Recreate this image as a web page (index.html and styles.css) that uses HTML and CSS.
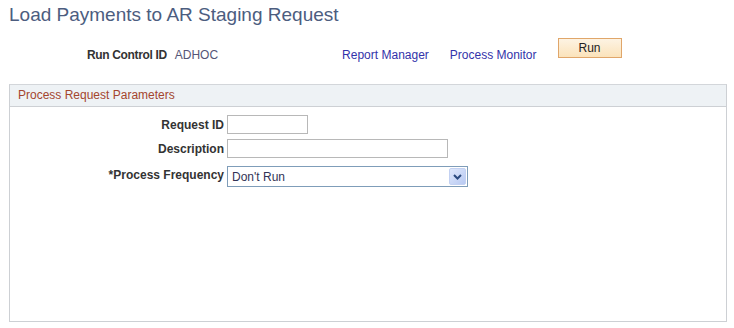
FILE: index.html
```html
<!DOCTYPE html>
<html>
<head>
<meta charset="utf-8">
<link rel="stylesheet" href="styles.css">
</head>
<body>
<h1 class="title">Load Payments to AR Staging Request</h1>
<div class="runbar">
  <span class="lbl rc-label">Run Control ID</span>
  <span class="rc-value">ADHOC</span>
  <a class="link link-rm" href="#">Report Manager</a>
  <a class="link link-pm" href="#">Process Monitor</a>
  <button class="run-btn">Run</button>
</div>
<div class="group">
  <div class="group-head">Process Request Parameters</div>
  <div class="form">
    <label class="lbl flabel">Request ID</label>
    <div class="field"><span class="input input-id"></span></div>
    <label class="lbl flabel">Description</label>
    <div class="field"><span class="input input-desc"></span></div>
    <label class="lbl flabel">*Process Frequency</label>
    <div class="field">
      <div class="select">
        <span class="select-text">Don't Run</span>
        <span class="select-btn">
          <svg width="9" height="6" viewBox="0 0 9 6"><path d="M1 1 L4.5 4.5 L8 1" fill="none" stroke="#2b4a7e" stroke-width="2"/></svg>
        </span>
      </div>
    </div>
  </div>
</div>
</body>
</html>
```
FILE: styles.css
```css
html, body {
  margin: 0;
  padding: 0;
  background: #ffffff;
  font-family: Arial, "Liberation Sans", sans-serif;
  font-size: 12px;
  color: #333333;
}
.title {
  margin: 0;
  padding: 3px 0 0 9px;
  height: 33px;
  box-sizing: border-box;
  font-size: 19px;
  font-weight: normal;
  color: #4c5d7f;
  line-height: 24px;
}
.runbar {
  display: flex;
  align-items: flex-start;
  height: 51px;
  padding-left: 87px;
  padding-top: 5px;
  box-sizing: border-box;
}
.lbl {
  font-weight: bold;
  color: #333333;
}
.rc-label {
  letter-spacing: -0.35px;
}
.rc-label, .rc-value, .link {
  margin-top: 10px;
  line-height: 14px;
}
.rc-value {
  margin-left: 8px;
  color: #555577;
}
.link {
  color: #3333aa;
  text-decoration: none;
}
.link-rm { margin-left: 124px; }
.link-pm { margin-left: 21px; }
.run-btn {
  margin-left: 21px;
  width: 64px;
  height: 20px;
  padding: 0;
  border: 1px solid #e0a66a;
  background: linear-gradient(#fdf3e3, #fbe3bb);
  font-family: Arial, "Liberation Sans", sans-serif;
  font-size: 12px;
  color: #222222;
}
.group {
  margin-left: 9px;
  width: 718px;
  height: 238px;
  box-sizing: border-box;
  border: 1px solid #cdd0d4;
  border-top-color: #d3d6da;
}
.group-head {
  height: 22px;
  box-sizing: border-box;
  background: #eef2f5;
  border-bottom: 1px solid #cdd0d4;
  padding-left: 8px;
  color: #a4452e;
  font-size: 12px;
  line-height: 21px;
}
.form {
  display: grid;
  grid-template-columns: 214px auto;
  column-gap: 3px;
  row-gap: 5px;
  padding-top: 8px;
}
.flabel {
  text-align: right;
  line-height: 18px;
  align-self: center;
}
.field {
  display: flex;
}
.input {
  display: block;
  height: 19px;
  box-sizing: border-box;
  border: 1px solid #b8b8b8;
  background: #fff;
}
.input-id { width: 81px; }
.input-desc { width: 221px; }
.select {
  display: flex;
  align-items: center;
  justify-content: space-between;
  width: 241px;
  height: 21px;
  box-sizing: border-box;
  border: 1px solid #7f9db9;
  padding: 0 1px 0 4px;
  margin-top: 3px;
}
.select-text {
  color: #333355;
  line-height: 16px;
}
.select-btn {
  display: flex;
  align-items: center;
  justify-content: center;
  width: 17px;
  height: 17px;
  box-sizing: border-box;
  border-radius: 2px;
  background: linear-gradient(135deg, #dfe8fb, #b8c9f2);
  border: 1px solid #c3d1f2;
}
```
